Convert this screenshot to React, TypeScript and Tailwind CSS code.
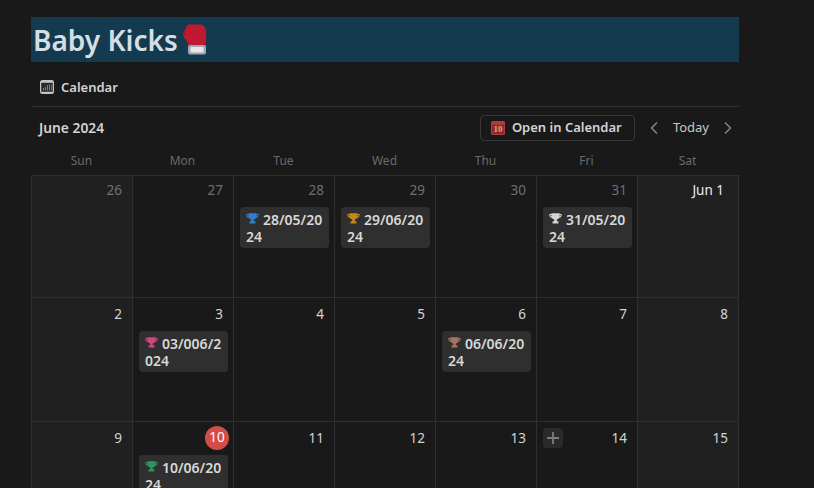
const FONT = "font-['Noto_Sans','Open_Sans',sans-serif]";

function Trophy({ color }: { color: string }) {
  return (
    <svg viewBox="0 0 16 16" className="mr-[4px] inline-block h-[13px] w-[13px] align-[0px]" fill={color}>
      <path d="M3 1.500h10v1h2.700c.2 2.800-1 4.500-3.400 4.900-.6 1-1.500 1.700-2.700 1.900v2.100h2v2.600H4.400v-2.600h2V9.300c-1.200-.2-2.100-.9-2.700-1.900C1.300 7 .1 5.300.3 2.500H3v-1zM1.500 3.700c.1.900.5 1.500 1.700 1.900-.1-.5-.2-1.200-.2-1.900H1.500zm11.500 0c0 .7-.1 1.400-.2 1.900 1.200-.4 1.600-1 1.700-1.900H13z" />
    </svg>
  );
}

function Glove() {
  return (
    <svg viewBox="0 0 25 31" className="h-[31px] w-[25px]">
      <path d="M7 .5h10c4 0 6.500 2.200 7 6 .5 4.500.2 10-.6 15H6.500c-.4-2-1-3.800-2-5.100C2.500 14.500 1 13 1 10c0-2 1-3.500 2.300-4.100C4 3 5 .5 7 .5z" fill="#be1931" />
      <path d="M1 9c.4-1.400 1.200-2.500 2.300-3.100-.3 1.800 0 3.800.9 5.400C2.800 11.100 1.600 10.300 1 9z" fill="#a0162a" />
      <rect x="6" y="21" width="18" height="9.500" rx="2" fill="#99aab5" />
      <rect x="8.500" y="23" width="13" height="5.500" rx="1" fill="#e6e7e8" />
    </svg>
  );
}

function CalendarGlyph() {
  return (
    <svg viewBox="0 0 14 14" className="mr-[7px] h-[14px] w-[14px]">
      <rect x="0" y="0" width="14" height="14" rx="2.500" fill="#c4c4c4" />
      <rect x="1.200" y="2.800" width="11.600" height="9" fill="#2b2b2b" />
      <path d="M5 7h1v3.500H5zM7 5h1v5.500H7zM9 4.500h1v6H9zM3 8h1v2.500H3zM11 4.500h.8v6H11z" fill="#7f7f7f" />
    </svg>
  );
}

function RedCalendar() {
  return (
    <svg viewBox="0 0 14 14" className="mr-[7px] h-[14px] w-[14px]">
      <rect width="14" height="14" rx="1.500" fill="#b23a3a" />
      <rect x="1" y="3.500" width="12" height="9.500" fill="#8a2c2c" />
      <text x="7" y="11.400" textAnchor="middle" fontSize="9" fill="#e0a08f" fontFamily="Liberation Serif, serif">10</text>
    </svg>
  );
}

type Day = {
  label: string;
  muted?: boolean;
  weekend?: boolean;
  today?: boolean;
  plus?: boolean;
  bright?: boolean;
  card?: { first: string; second: string; color: string };
};

const weeks: Day[][] = [
  [
    { label: "26", muted: true, weekend: true },
    { label: "27", muted: true },
    { label: "28", muted: true, card: { first: "28/05/20", second: "24", color: "#2f7fd1" } },
    { label: "29", muted: true, card: { first: "29/06/20", second: "24", color: "#c4881c" } },
    { label: "30", muted: true },
    { label: "31", muted: true, card: { first: "31/05/20", second: "24", color: "#d4d4d4" } },
    { label: "Jun 1", weekend: true, bright: true },
  ],
  [
    { label: "2", weekend: true },
    { label: "3", card: { first: "03/006/2", second: "024", color: "#c9487f" } },
    { label: "4" },
    { label: "5" },
    { label: "6", card: { first: "06/06/20", second: "24", color: "#a67561" } },
    { label: "7" },
    { label: "8", weekend: true },
  ],
  [
    { label: "9", weekend: true },
    { label: "10", today: true, card: { first: "10/06/20", second: "24", color: "#2e9461" } },
    { label: "11" },
    { label: "12" },
    { label: "13" },
    { label: "14", plus: true },
    { label: "15", weekend: true },
  ],
];

const names = ["Sun", "Mon", "Tue", "Wed", "Thu", "Fri", "Sat"];

function labelColor(day: Day) {
  if (day.bright) return "pr-[9px] text-[#e6eef2]";
  if (day.muted) return "pr-[5px] text-[#6f6f6f]";
  return "pr-[5px] text-[#d4d4d4]";
}

function Cell({ day, first }: { day: Day; first: boolean }) {
  return (
    <div
      className={`relative border-l border-[#2f2f2f] pl-[6px] pr-[5px] ${first ? "h-[121px]" : "h-[123px]"} ${
        day.weekend ? "bg-[#202020]" : ""
      }`}
    >
      <div className={`flex h-[24px] items-center justify-end text-[13.5px] ${first ? "mt-[2px]" : "mt-[4px]"} ${labelColor(day)}`}>
        {day.today ? (
          <span className="-mr-[6px] -mt-[1px] flex h-[24px] w-[24px] items-center justify-center rounded-full bg-[#d44c47] text-white">
            {day.label}
          </span>
        ) : (
          day.label
        )}
      </div>
      {day.plus && (
        <div className="absolute left-[6px] top-[6px] flex h-[20px] w-[20px] items-center justify-center rounded-[4px] bg-[#2a2a2a]">
          <svg viewBox="0 0 14 14" className="h-[14px] w-[14px]" stroke="#7d7d7d" strokeWidth="1.800">
            <path d="M7 1v12M1 7h12" />
          </svg>
        </div>
      )}
      {day.card && (
        <div className="mt-[5px] h-[41px] rounded-[4px] bg-[#2f2f2f] px-[6px] pt-[4px] text-[14px] leading-[17px] font-semibold whitespace-nowrap text-[#d8d8d8]">
          <Trophy color={day.card.color} />
          {day.card.first}
          <br />
          {day.card.second}
        </div>
      )}
    </div>
  );
}

export default function App() {
  return (
    <div className={`h-[488px] w-[814px] overflow-hidden bg-[#191919] pt-[17px] pl-[31px] ${FONT}`}>
      <div className="w-[708px]">
        <div className="flex h-[45px] items-center bg-[#133a4f] pl-[2px]">
          <span className="text-[28px] font-semibold text-[#d5dee3]">Baby Kicks</span>
          <span className="ml-[4px]"><Glove /></span>
        </div>

        <div className="flex h-[45px] items-center border-b border-[#2f2f2f] pt-[6px] pl-[9px] text-[13px] font-semibold text-[#d4d4d4]">
          <CalendarGlyph />
          <span className="mt-[2px]">Calendar</span>
        </div>

        <div className="flex h-[43px] items-center justify-between pb-[2px] pl-[8px] pr-[6px]">
          <span className="mt-[2px] text-[13.800px] font-semibold text-[#d4d4d4]">June 2024</span>
          <div className="flex items-center">
            <div className="flex h-[26px] w-[155px] items-center rounded-[4px] border border-[#383838] pl-[10px] text-[13px] font-semibold text-[#d4d4d4]">
              <RedCalendar />
              <span className="mt-[1px]">Open in Calendar</span>
            </div>
            <svg viewBox="0 0 10 14" className="ml-[14px] h-[14px] w-[10px]" fill="none" stroke="#8a8a8a" strokeWidth="1.400">
              <path d="M8 1.500 2.500 7 8 12.500" />
            </svg>
            <span className="mx-[14px] mt-[1px] text-[13px] text-[#c8c8c8]">Today</span>
            <svg viewBox="0 0 10 14" className="h-[14px] w-[10px]" fill="none" stroke="#8a8a8a" strokeWidth="1.400">
              <path d="M2 1.500 7.500 7 2 12.500" />
            </svg>
          </div>
        </div>

        <div className="grid h-[25px] grid-cols-[repeat(7,101px)] items-center pb-[3px] text-center text-[12px] text-[#6a6a6a]">
          {names.map((n) => (
            <div key={n}>{n}</div>
          ))}
        </div>

        <div className="border-r border-[#2f2f2f]">
          {weeks.map((week, i) => (
            <div key={i} className="grid grid-cols-[repeat(7,101px)] border-t border-[#2f2f2f]">
              {week.map((day) => (
                <Cell key={day.label} day={day} first={i === 0} />
              ))}
            </div>
          ))}
        </div>
      </div>
    </div>
  );
}
